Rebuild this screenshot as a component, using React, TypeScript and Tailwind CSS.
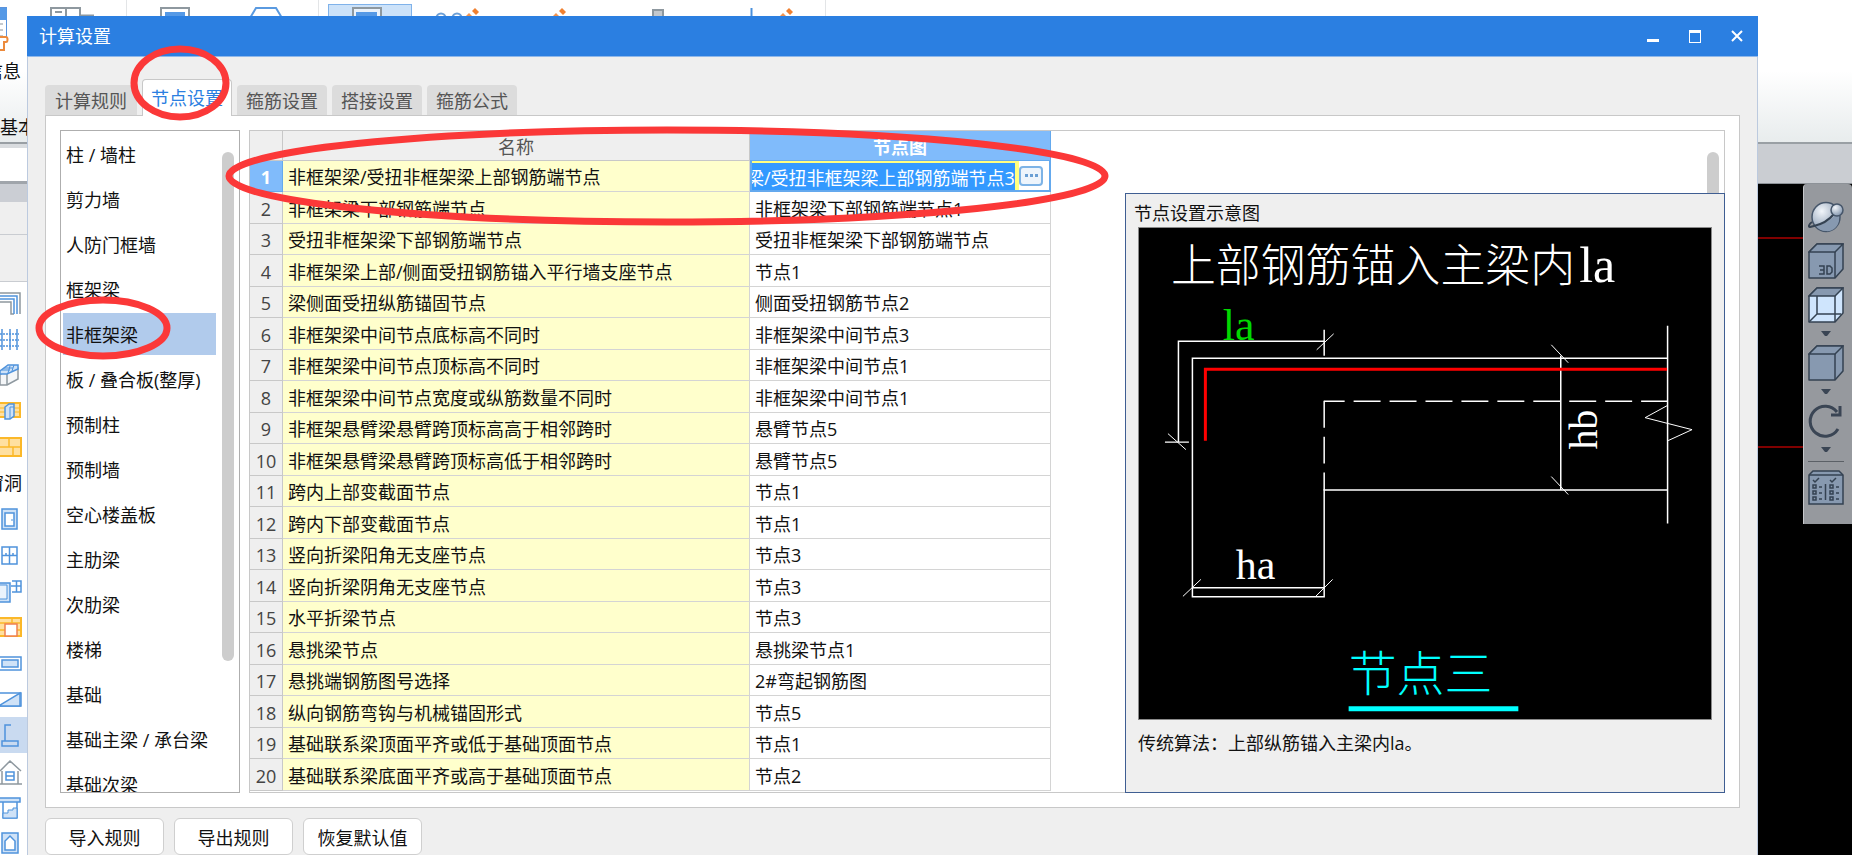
import React, { useEffect, useRef, useState } from "react";

const tabs = ["计算规则", "节点设置", "箍筋设置", "搭接设置", "箍筋公式"];

const categories = [
  "柱 / 墙柱",
  "剪力墙",
  "人防门框墙",
  "框架梁",
  "非框架梁",
  "板 / 叠合板(整厚)",
  "预制柱",
  "预制墙",
  "空心楼盖板",
  "主肋梁",
  "次肋梁",
  "楼梯",
  "基础",
  "基础主梁 / 承台梁",
  "基础次梁",
];

const rows: [string, string][] = [
  ["非框架梁/受扭非框架梁上部钢筋端节点", "非框架梁/受扭非框架梁上部钢筋端节点3"],
  ["非框架梁下部钢筋端节点", "非框架梁下部钢筋端节点1"],
  ["受扭非框架梁下部钢筋端节点", "受扭非框架梁下部钢筋端节点"],
  ["非框架梁上部/侧面受扭钢筋锚入平行墙支座节点", "节点1"],
  ["梁侧面受扭纵筋锚固节点", "侧面受扭钢筋节点2"],
  ["非框架梁中间节点底标高不同时", "非框架梁中间节点3"],
  ["非框架梁中间节点顶标高不同时", "非框架梁中间节点1"],
  ["非框架梁中间节点宽度或纵筋数量不同时", "非框架梁中间节点1"],
  ["非框架悬臂梁悬臂跨顶标高高于相邻跨时", "悬臂节点5"],
  ["非框架悬臂梁悬臂跨顶标高低于相邻跨时", "悬臂节点5"],
  ["跨内上部变截面节点", "节点1"],
  ["跨内下部变截面节点", "节点1"],
  ["竖向折梁阳角无支座节点", "节点3"],
  ["竖向折梁阴角无支座节点", "节点3"],
  ["水平折梁节点", "节点3"],
  ["悬挑梁节点", "悬挑梁节点1"],
  ["悬挑端钢筋图号选择", "2#弯起钢筋图"],
  ["纵向钢筋弯钩与机械锚固形式", "节点5"],
  ["基础联系梁顶面平齐或低于基础顶面节点", "节点1"],
  ["基础联系梁底面平齐或高于基础顶面节点", "节点2"],
];

/* ---------- ribbon behind the dialog ---------- */

function Pencil({ x }: { x: number }) {
  return (
    <g transform={`translate(${x} 9)`} fill="#f08030">
      <path d="M8 2l3-3 4 4-3 3z" />
      <path d="M5 4l5 5-3 3-5-5z" opacity="0.85" />
    </g>
  );
}

function Ribbon() {
  return (
    <header className="relative flex h-[144px] shrink-0 items-start overflow-hidden border-b-2 border-[#999fa4] bg-gradient-to-b from-white from-50% to-[#e8eced]">
      <svg width="840" height="56" viewBox="0 0 840 56" fill="none" aria-hidden="true">
        <rect x="-20" y="7.5" width="26.500" height="33" fill="#fff" stroke="#5a93dc" />
        <rect x="-20" y="8" width="27" height="12" fill="#5599e6" />
        <path d="M0 24h3M0 30h3M0 36h3" stroke="#8a939b" />
        <path d="M-4 37h10c2 0 2 5 0 5h-2v8H-4" fill="#fff" stroke="#ec8a3c" strokeWidth="2" />
        <path d="M51 20V8h29v12M66 8v12M55 12h7M80 15.500h14" stroke="#8e989f" strokeWidth="2" />
        <path d="M126.500 0v16M318.500 0v16M825.500 0v16" stroke="#e3e5e7" />
        <rect x="161" y="8" width="28" height="20" stroke="#8e989f" strokeWidth="2" />
        <rect x="165" y="12" width="20" height="12" fill="#5599e6" />
        <path d="M250 18l6-10h20l6 10" stroke="#5a9ae0" strokeWidth="2" />
        <rect x="328.500" y="4.500" width="83" height="30" fill="#cce2f9" stroke="#7fb2ea" />
        <rect x="353" y="8" width="28" height="20" fill="#e8f1fb" stroke="#8e989f" strokeWidth="2" />
        <rect x="356" y="12" width="21" height="12" fill="#5599e6" />
        <circle cx="441" cy="18" r="4.500" stroke="#6c9fd6" strokeWidth="2" />
        <circle cx="457" cy="18" r="4.500" stroke="#6c9fd6" strokeWidth="2" />
        <Pencil x={464} />
        <Pencil x={551} />
        <rect x="653" y="10" width="10" height="14" fill="#c3c8cd" stroke="#8e989f" strokeWidth="2" />
        <path d="M751.500 8v10" stroke="#4a90dc" strokeWidth="2" />
        <Pencil x={778} />
      </svg>
    </header>
  );
}

/* ---------- tool strip on the left edge ---------- */

const B = "#4f93dc";
const L = "#cfe2f7";
const toolIcons: React.ReactNode[] = [
  <>
    <path d="M0 8h20v21M0 17h11v12h3" stroke="#8e989f" strokeWidth="1.500" />
    <path d="M0 11h17v18M0 14h14v15" stroke={B} strokeWidth="1.500" />
  </>,
  <>
    <path d="M2 8v21M10 8v21M17 8v21" stroke={B} strokeWidth="1.500" />
    <path d="M0 13h19M0 19h19M0 25h19" stroke={B} strokeWidth="1.500" strokeDasharray="2 1" />
  </>,
  <>
    <path d="M0 18l6-7h12v11l-11 6H0z" fill="#f4f6f8" stroke="#8e989f" strokeWidth="1.500" />
    <path d="M7 17v11" stroke="#8e989f" strokeWidth="1.500" />
    <path d="M0 14l8-6h10v4L7 17H0z" fill={L} stroke={B} strokeWidth="1.500" />
    <path d="M4 11h9M2 13h8M10 9l-2 7M14 8l-2 6" stroke={B} />
  </>,
  <>
    <rect x="-6" y="10" width="26" height="14" fill="#ffe0a0" stroke="#fbb829" strokeWidth="2" />
    <path d="M0 15h20M0 19h20" stroke="#fbb829" />
    <path d="M5 14l4-3h5v12l-4 3H5z" fill={L} stroke={B} strokeWidth="1.500" />
    <path d="M10 26V14h4" stroke={B} />
  </>,
  <>
    <rect x="-6" y="9" width="27" height="18" fill="#ffe0a0" stroke="#fbb829" strokeWidth="2" />
    <path d="M0 18h21M9 9v9M13 18v9" stroke="#fbb829" strokeWidth="1.500" />
  </>,
  null,
  <>
    <rect x="2" y="8" width="15" height="20" fill={L} stroke={B} strokeWidth="1.500" />
    <rect x="5" y="12" width="9" height="13" fill="#fff" stroke={B} strokeWidth="1.500" />
    <path d="M12 18v2" stroke={B} />
  </>,
  <path d="M2 10h15v17H2zM9.500 10v17M2 18.500h15M6 16v2M13 16v2" stroke={B} strokeWidth="1.500" />,
  <>
    <path d="M0 10h10v19H0" fill={L} stroke={B} strokeWidth="1.500" />
    <path d="M0 12h7v14H0" fill="#eaf3fc" stroke={B} />
    <path d="M12 8h9v11h-9M16.500 8v11M11 13h10" stroke={B} strokeWidth="1.500" />
  </>,
  <>
    <rect x="-6" y="9" width="27" height="18" fill="#ffe0a0" stroke="#fbb829" strokeWidth="2" />
    <path d="M0 14h21M0 21h21M12 9v5" stroke="#fbb829" strokeWidth="1.500" />
    <rect x="5" y="15" width="12" height="12" fill="#fff" stroke="#f08050" strokeWidth="1.500" />
  </>,
  <>
    <rect x="-4" y="12" width="25" height="13" fill="#fff" stroke={B} strokeWidth="1.500" />
    <rect x="2" y="15" width="16" height="7" fill={L} stroke={B} strokeWidth="1.500" />
  </>,
  <>
    <rect x="-4" y="12" width="25" height="13" fill="#fff" stroke={B} strokeWidth="1.500" />
    <path d="M0 24L20 12v13H0z" fill={L} stroke={B} strokeWidth="1.500" />
  </>,
  <path d="M11 8H5v16h13v5H2v-5h3" stroke={B} strokeWidth="1.500" />,
  <>
    <path d="M0 18L10 8l11 10M2 18v13h16V18M0 31h22" stroke="#8e989f" strokeWidth="1.500" />
    <path d="M6 19h8v8H6zM6 23h8" stroke={B} strokeWidth="1.500" />
  </>,
  <>
    <path d="M3 12h14v17H3z" fill="#fff" stroke={B} strokeWidth="1.500" />
    <path d="M3 24h5v-3h5v-2h4v10H3z" fill={L} stroke={B} />
    <rect x="-2" y="9" width="22" height="4" fill={L} stroke={B} strokeWidth="1.500" />
  </>,
  <>
    <rect x="2" y="8" width="16" height="20" fill={L} stroke={B} strokeWidth="1.500" />
    <path d="M5 25v-9l5-5 5 5v9z" fill="#fff" stroke={B} strokeWidth="1.500" />
  </>,
];

function ToolStrip() {
  return (
    <aside className="flex w-[27px] shrink-0 flex-col bg-white">
      <div className="h-10 shrink-0 border-t-4 border-b-[3px] border-t-[#d9dcdf] border-b-[#a0a5ab] bg-white" />
      <div className="h-[18px] shrink-0 bg-[#cbced4]" />
      <div className="h-[33px] shrink-0 border-b border-[#c9ccd1] bg-[#efefef]" />
      <div className="h-[47px] shrink-0 border-b border-[#c9ccd1] bg-[#efefef]" />
      <div className="flex flex-col pt-[3px]">
        {toolIcons.map((icon, i) =>
          icon ? (
            <div key={i} className={i === 12 ? "h-9 shrink-0 bg-[#c9daf0]" : "h-9 shrink-0"}>
              <svg width="27" height="36" viewBox="0 0 27 36" fill="none" aria-hidden="true">
                {icon}
              </svg>
            </div>
          ) : (
            <div key={i} className="flex h-9 w-[22px] shrink-0 items-center justify-end overflow-hidden whitespace-nowrap">
              窗洞
            </div>
          )
        )}
      </div>
    </aside>
  );
}

/* ---------- view toolbar on the right edge ---------- */

function Caret() {
  return (
    <svg width="10" height="6" viewBox="0 0 10 6" aria-hidden="true">
      <path d="M0 0h10L6 5H4z" fill="#3a4554" />
    </svg>
  );
}

function Cube({ children, face = "#8799b0" }: { children?: React.ReactNode; face?: string }) {
  return (
    <svg width="36" height="36" viewBox="0 0 36 36" fill="none" stroke="#344252" strokeWidth="1.500" aria-hidden="true">
      <path d="M1 9l8-8h26v25l-8 9H1z" fill={face} strokeLinejoin="round" />
      <path d="M1 9l8-8h26l-8 8z" fill="#8799b0" />
      <path d="M27 9v26" />
      {children}
    </svg>
  );
}

function ViewToolbar() {
  return (
    <div className="flex h-[340px] w-[49px] flex-col items-center gap-2 rounded-t border-l border-[#c6c8cb] bg-[#96999e] pt-[15px] pr-1">
      <button aria-label="动态观察">
        <svg width="36" height="36" viewBox="0 0 36 36" fill="none" aria-hidden="true">
          <defs>
            <radialGradient id="globe" cx="35%" cy="30%" r="70%">
              <stop offset="0" stopColor="#f2f6fb" />
              <stop offset="1" stopColor="#8799b0" />
            </radialGradient>
          </defs>
          <ellipse cx="18" cy="18" rx="14" ry="14.500" fill="url(#globe)" stroke="#46566a" strokeWidth="1.500" />
          <path d="M8 27C15 26 24 20 31 13v7c0 8-7 13-13 12-4 0-8-2-10-5z" fill="#8799b0" />
          <path d="M4 23c-3 2-4 5-2 5l4-1c9-2 15-6 20-12" stroke="#344252" strokeWidth="2" />
          <circle cx="29" cy="11" r="6" fill="url(#globe)" stroke="#46566a" strokeWidth="1.500" />
        </svg>
      </button>
      <button aria-label="三维">
        <Cube>
          <path d="M11 23h5v4h-4M16 27v4h-5M19 23h3l2 2v4l-2 2h-3z" />
        </Cube>
      </button>
      <button aria-label="线框">
        <Cube face="#cfe5fd">
          <path d="M9 9v18h24M9 27l-8 8" />
        </Cube>
      </button>
      <Caret />
      <button aria-label="视图">
        <Cube />
      </button>
      <Caret />
      <button aria-label="旋转">
        <svg width="36" height="36" viewBox="0 0 36 36" fill="none" stroke="#3a4554" strokeWidth="3" aria-hidden="true">
          <path d="M30 26A15 15 0 1 1 29 9M32 3v9h-9" />
        </svg>
      </button>
      <Caret />
      <div className="h-px w-9 shrink-0 bg-[#5b6066]" />
      <button aria-label="显示设置">
        <svg width="36" height="36" viewBox="0 0 36 36" fill="none" stroke="#344252" strokeWidth="1.500" aria-hidden="true">
          <path d="M1 5l4-4h26l4 4v29H1z" fill="#8799b0" />
          <path d="M1 5h34M5 10l2 2 4-4M22 10l2 2 4-4M17.500 14v16" />
          <path d="M5 15h3v3H5zM5 21h3v3H5zM5 27h3v3H5zM22 15h3v3h-3zM22 21h3v3h-3zM22 27h3v3h-3z" />
          <path d="M11 17h3M11 23h3M11 29h3M28 17h3M28 23h3M28 29h3" />
        </svg>
      </button>
    </div>
  );
}

/* ---------- dialog content ---------- */

function NodeDiagram() {
  return (
    <svg viewBox="1138 227 573 492" className="block w-full border border-[#8a8a8a] bg-black" fill="none" stroke="#fff" role="img" aria-label="节点设置示意图">
      <g stroke="none" fill="#fff" className="font-['Noto_Sans_CJK_SC',sans-serif] font-light">
        <text x="1170" y="281" fontSize="45">
          上部钢筋锚入主梁内
        </text>
        <text x="1348" y="691" fontSize="48" fill="#00ffff">
          节点三
        </text>
      </g>
      <g stroke="none" fill="#fff" className="font-['Liberation_Serif',serif]">
        <text x="1579" y="281" fontSize="50">
          la
        </text>
        <text x="1222" y="339" fontSize="44" fill="#00d800">
          la
        </text>
        <text x="1235" y="579" fontSize="42">
          ha
        </text>
        <text transform="translate(1597 449) rotate(-90)" fontSize="40">
          hb
        </text>
      </g>
      <path d="M1348 708.500h170" stroke="#00ffff" strokeWidth="5" />
      <g strokeWidth="1.500">
        <path d="M1323.500 340.500H1177.500V441M1164 441.500h24M1323.500 329v26" />
        <path d="M1667 357.500H1191.500V596.500H1323.500V489.500H1667M1191.500 587.500h132M1667.500 325v198M1560.500 355v135" />
        <path d="M1323.500 400.500H1344M1353 400.500H1667" strokeDasharray="27 9" />
        <path d="M1323.500 400v27M1323.500 436v27M1323.500 472v18" />
      </g>
      <path d="M1167 433l18 16M1316 349l17-16M1182 596l18-17M1315 596l17-17M1551 344l17 18M1551 476l17 18M1667 405l-22 12 47 12-24 11" />
      <path d="M1204.500 440V368.500H1667" stroke="#f00" strokeWidth="3" />
    </svg>
  );
}

function NodeEditor({ initial }: { initial: string }) {
  const [value, setValue] = useState(initial);
  const ref = useRef<HTMLInputElement>(null);
  useEffect(() => {
    if (ref.current) ref.current.scrollLeft = ref.current.scrollWidth;
  }, []);
  return (
    <div className="flex h-full bg-[#ffff80]">
      <input
        ref={ref}
        aria-label="节点图"
        value={value}
        onChange={(e) => setValue(e.target.value)}
        className="mt-[2px] h-[27px] min-w-0 flex-1 bg-[#3399ff] text-white outline-none"
      />
      <div className="ml-1 flex w-[30px] items-center bg-white">
        <button
          aria-label="选择节点图"
          className="flex h-5 w-6 items-center justify-center gap-[2px] rounded border-2 border-[#7db3e6] bg-[#eef5fc]"
        >
          <i className="size-[3px] bg-[#6a9fd4]" />
          <i className="size-[3px] bg-[#6a9fd4]" />
          <i className="size-[3px] bg-[#6a9fd4]" />
        </button>
      </div>
    </div>
  );
}

function NodeTable() {
  return (
    <table className="w-[801px] table-fixed border-separate border-spacing-0">
      <colgroup>
        <col className="w-[33px]" />
        <col className="w-[467px]" />
        <col className="w-[301px]" />
      </colgroup>
      <thead>
        <tr className="h-[30px] text-[#555]">
          <th className="border-r border-b border-[#c8c8c8] bg-[#efefef] p-0" />
          <th className="border-r border-b border-[#c8c8c8] bg-[#efefef] p-0 pt-[2px] font-normal">名称</th>
          <th className="border-r border-b border-[#64a9ee] bg-[#80bbfb] p-0 pt-[2px] font-bold text-white">节点图</th>
        </tr>
      </thead>
      <tbody>
        {rows.map(([name, node], i) => (
          <tr key={name} className="odd:h-[31px] even:h-8">
            <th
              className={
                i === 0
                  ? "border-r border-b border-[#64a9ee] bg-[#80bbfb] p-0 pt-[2px] font-bold text-white"
                  : "border-r border-b border-[#c8c8c8] bg-[#efefef] p-0 pt-[2px] font-normal text-[#444]"
              }
            >
              {i + 1}
            </th>
            <td className="border-r border-b border-[#d4d4d4] bg-[#ffffcc] pt-[2px] pr-0 pb-0 pl-[5px]">{name}</td>
            {i === 0 ? (
              <td className="h-[31px] border-2 border-t-0 border-[#64a9ee] p-0">
                <NodeEditor initial={node} />
              </td>
            ) : (
              <td className="border-r border-b border-[#d4d4d4] pt-[2px] pr-0 pb-0 pl-[5px]">{node}</td>
            )}
          </tr>
        ))}
      </tbody>
    </table>
  );
}

function CalcDialog() {
  const [tab, setTab] = useState(1);
  const [category, setCategory] = useState(4);
  return (
    <section
      role="dialog"
      aria-labelledby="dialog-title"
      className="absolute top-4 right-[94px] bottom-0 left-[27px] flex flex-col bg-[#efefef]"
    >
      <div className="flex h-[41px] shrink-0 items-center border-b border-[#8fb8ea] bg-[#2b7fe1] pl-3 text-white">
        <h1 id="dialog-title" className="flex-1">
          计算设置
        </h1>
        <button aria-label="最小化" className="flex h-10 w-[42px] items-center justify-center pt-2">
          <i className="h-[3px] w-3 bg-white" />
        </button>
        <button aria-label="最大化" className="flex h-10 w-[42px] items-center justify-center">
          <i className="h-[13px] w-3 border border-t-[3px] border-white" />
        </button>
        <button aria-label="关闭" className="flex h-10 w-[42px] items-center justify-center">
          <svg width="12" height="12" viewBox="0 0 12 12" stroke="#fff" strokeWidth="2" aria-hidden="true">
            <path d="M1 1l10 10M11 1L1 11" />
          </svg>
        </button>
      </div>

      <div className="flex min-h-0 flex-1 flex-col border-x border-[#bccadf] px-[17px] pt-[22px]">
        <div role="tablist" className="z-10 -mb-px flex shrink-0 items-end gap-[5px]">
          {tabs.map((t, i) => (
            <button
              key={t}
              role="tab"
              aria-selected={i === tab}
              onClick={() => setTab(i)}
              className={
                i === tab
                  ? "h-[37px] rounded-t border border-b-0 border-[#c8c8c8] bg-white px-2 text-[#2b7fe1]"
                  : "mb-px h-[30px] rounded-t bg-[#dcdcdc] px-[9px] pt-[2px] text-[#555] first:px-[10px]"
              }
            >
              {t}
            </button>
          ))}
        </div>

        <div className="flex min-h-0 flex-1 gap-[9px] border border-[#c8c8c8] bg-white p-[14px]">
          <nav className="flex w-[180px] shrink-0 overflow-hidden border border-[#aeaeae] pl-[2px]">
            <ul className="flex w-[153px] flex-col gap-[3px] pt-[2px]">
              {categories.map((c, i) => (
                <li key={c} className="shrink-0">
                  <button
                    onClick={() => setCategory(i)}
                    className={
                      i === category
                        ? "h-[42px] w-full bg-[#b1cbec] pt-[2px] pl-[3px] text-left whitespace-nowrap"
                        : "h-[42px] w-full pt-[2px] pl-[3px] text-left whitespace-nowrap"
                    }
                  >
                    {c}
                  </button>
                </li>
              ))}
            </ul>
            <div className="mt-[21px] ml-[6px] h-[509px] w-3 shrink-0 rounded-full bg-[#cdcdcd]" />
          </nav>

          <div className="relative flex min-w-0 flex-1 items-start justify-between border border-[#c8c8c8] pr-[5px]">
            <NodeTable />
            <div className="mt-[21px] h-[400px] w-3 rounded-full bg-[#cdcdcd]" />
            <div className="absolute top-[62px] -right-px -bottom-px flex w-[600px] flex-col border border-[#3f5e92] bg-[#efefef] px-3">
              <h2 className="-ml-1 flex h-[33px] items-center pt-1">节点设置示意图</h2>
              <NodeDiagram />
              <p className="mt-[11px]">传统算法：上部纵筋锚入主梁内la。</p>
            </div>
          </div>
        </div>

        <div className="flex shrink-0 gap-[10px] pt-[10px]">
          {["导入规则", "导出规则", "恢复默认值"].map((b) => (
            <button key={b} className="h-[37px] w-[119px] rounded-md border border-[#cfcfcf] bg-white pt-[2px]">
              {b}
            </button>
          ))}
        </div>
      </div>
    </section>
  );
}

function Marks() {
  return (
    <svg className="pointer-events-none absolute inset-0 z-20 h-full w-full" fill="none" stroke="#fb3838" strokeWidth="7" aria-hidden="true">
      <ellipse cx="180" cy="83" rx="46" ry="34" />
      <ellipse cx="103" cy="328" rx="64" ry="28" />
      <ellipse cx="667" cy="176" rx="438" ry="46" />
    </svg>
  );
}

export default function App() {
  return (
    <div className="relative flex h-screen flex-col overflow-hidden bg-white font-['Open_Sans','Noto_Sans_CJK_SC',sans-serif] text-[18px] leading-6 text-[#111]">
      <Ribbon />
      <div className="absolute top-[59px] left-0 flex w-[21px] justify-end overflow-hidden whitespace-nowrap">信息</div>
      <div className="absolute top-[115px] left-0 flex w-[27px] overflow-hidden whitespace-nowrap">基本</div>
      <div className="flex min-h-0 flex-1">
        <ToolStrip />
        <main className="flex min-w-0 flex-1 flex-col">
          <div className="h-10 shrink-0 border-b border-[#8d9298] bg-[#cacdd2]" />
          <div className="relative flex flex-1 items-start justify-end bg-black">
            <div className="absolute inset-x-0 top-[53px] h-[211px] border-y-2 border-[#800000]" />
            <div className="relative">
              <ViewToolbar />
            </div>
          </div>
        </main>
      </div>
      <CalcDialog />
      <Marks />
    </div>
  );
}
